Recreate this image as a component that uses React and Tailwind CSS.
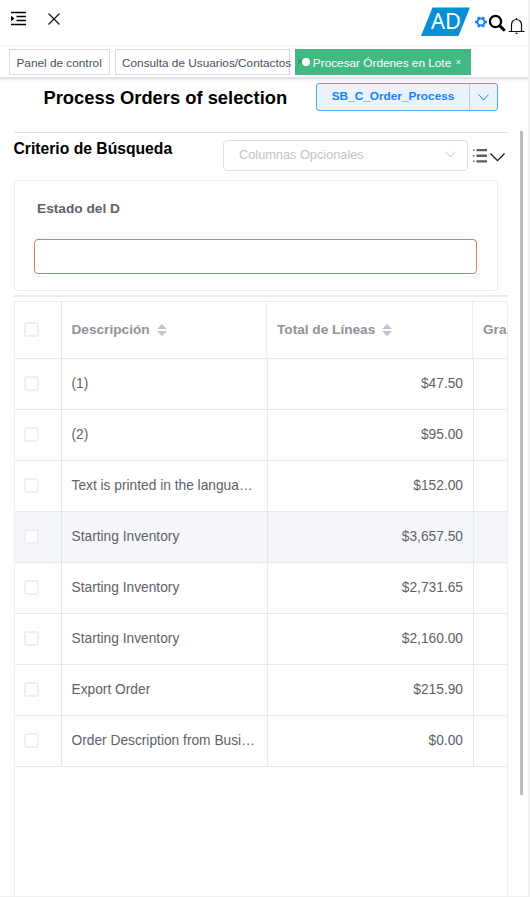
import React from "react";

const rows = [
  ["(1)", "$47.50"],
  ["(2)", "$95.00"],
  ["Text is printed in the langua…", "$152.00"],
  ["Starting Inventory", "$3,657.50"],
  ["Starting Inventory", "$2,731.65"],
  ["Starting Inventory", "$2,160.00"],
  ["Export Order", "$215.90"],
  ["Order Description from Busi…", "$0.00"],
];

function Checkbox() {
  return <span className="block h-[15px] w-[15px] rounded-[3px] border-2 border-[#eff0f5] bg-white" />;
}

function SortIcon() {
  return (
    <svg width="10" height="12" viewBox="0 0 10 12" className="ml-[7px] shrink-0 fill-[#c0c4cc]">
      <path d="M0 5 5 0l5 5zM0 7h10l-5 5z" />
    </svg>
  );
}

function Chevron({ className }) {
  return (
    <svg width="11" height="7" viewBox="0 0 11 7" fill="none" stroke="currentColor" className={className}>
      <path d="m.5.5 5 5.500 5-5.500" />
    </svg>
  );
}

function Header() {
  return (
    <header className="flex h-[45px] shrink-0 items-start pl-[10px]">
      <svg width="17" height="15" viewBox="0 0 17 15" className="mt-[11px]" stroke="#000" strokeWidth="1.3">
        <path d="M1 1.500h15M6.500 5.500H16M6.500 9.500H16M1 13.500h15" />
        <path d="M1 4.800 4.500 7.500 1 10.200z" stroke="none" />
      </svg>
      <svg width="12" height="12" viewBox="0 0 12 12" className="mt-[13px] ml-[21px]" stroke="#111" strokeWidth="1.2">
        <path d="m.5.5 11 11M11.500.5l-11 11" />
      </svg>
      <svg width="49" height="29" viewBox="0 0 49 29" className="mt-[7px] ml-[361px]">
        <path d="M11.500.5H49L37.500 29H0z" fill="#058fd4" />
        <text x="10" y="22" fill="#fff" fontFamily="Noto Sans" fontSize="21" textLength="30" lengthAdjust="spacingAndGlyphs">AD</text>
      </svg>
      <svg width="12" height="12" viewBox="0 0 12 12" className="mt-[16px] ml-[5px]" fill="none" stroke="#1682f5">
        <circle cx="6" cy="6" r="3.500" strokeWidth="2" />
        <path d="M3.900 2.400 3.200 1M8.100 2.400 8.800 1M10 6h2M8.100 9.600l.7 1.400M3.900 9.600 3.200 11M2 6H0" strokeWidth="2.600" />
      </svg>
      <svg width="18" height="18" viewBox="0 0 18 18" className="mt-[14px] ml-[1px]" fill="none" stroke="#000">
        <circle cx="7.500" cy="7.500" r="5.600" strokeWidth="2.300" />
        <path d="m11.500 11.500 5.300 5.300" strokeWidth="3" />
      </svg>
      <svg width="17" height="17" viewBox="0 0 17 17" className="mt-[17px] ml-[2px]" fill="none" stroke="#111" strokeWidth="1.200">
        <path d="M.5 14.500h16M3.500 14.500V7.500a5 5 0 0 1 10 0v7M7.500 16.400h2M8.500 2.500V1" />
      </svg>
    </header>
  );
}

function Tabs() {
  return (
    <nav className="flex h-[34px] shrink-0 gap-[5px] border-b-2 border-[#e0e2e6] bg-white pt-[4px] pl-[9px] text-[11.800px] leading-[26px] whitespace-nowrap text-[#495060] shadow-[0_1px_2px_rgba(0,0,0,0.08),inset_0_1px_2px_rgba(0,0,0,0.06)]">
      <div className="h-[26px] w-[101px] border border-[#d8dce5] pl-[6.500px]">Panel de control</div>
      <div className="h-[26px] w-[175px] border border-[#d8dce5] pl-[6px]">Consulta de Usuarios/Contactos</div>
      <div className="flex h-[26px] w-[176px] items-center bg-[#42b983] pl-[2px] text-white">
        <span className="text-[10px] leading-none text-[#2d8a60]">×</span>
        <span className="-ml-px h-[8px] w-[8px] rounded-full bg-white" />
        <span className="ml-[3px] pt-[2px]">Procesar Órdenes en Lote</span>
        <span className="ml-[4.500px] text-[9px]">×</span>
      </div>
    </nav>
  );
}

function TitleRow() {
  return (
    <div className="flex h-[53px] shrink-0 pt-[4px] pl-[43.500px]">
      <h1 className="w-[272.500px] pt-[4px] text-[18.350px] leading-[22px] font-bold text-black">Process Orders of selection</h1>
      <div className="flex h-[28px] w-[182px] rounded-[3px] border border-[#55a7f8] bg-[#e8f3fe] text-[#1682f5]">
        <div className="flex w-[153px] items-center justify-center border-r border-[#a9d2fb] text-[11.800px] font-bold">SB_C_Order_Process</div>
        <div className="flex flex-1 items-center justify-center"><Chevron /></div>
      </div>
    </div>
  );
}

function Criteria() {
  return (
    <section className="mr-[20px] ml-[13.500px] h-[165px] shrink-0 border-t border-b-2 border-t-[#dfe2e8] border-b-[#e9ebf1]">
      <div className="flex h-[47px] pt-[7px]">
        <h2 className="w-[209.500px] text-[15.700px] leading-[18px] font-bold text-black">Criterio de Búsqueda</h2>
        <div className="flex h-[31px] w-[245px] items-center justify-between rounded-[4px] border border-[#dcdfe6] pr-[11px] pb-[2px] pl-[15px] text-[12.750px] text-[#c0c4cc]">
          <span>Columnas Opcionales</span>
          <Chevron />
        </div>
        <svg width="14" height="14" viewBox="0 0 14 14" className="mt-[9px] ml-[5px]" fill="#5c5e62">
          <path d="M3.500 0H14v2.300H3.500zM3.500 5.500H14v2.400H3.500zM3.500 11.200H14v2.300H3.500zM0 .4h1.500v1.500H0zM0 6h1.500v1.500H0zM0 11.600h1.500v1.500H0z" />
        </svg>
        <svg width="15" height="9" viewBox="0 0 15 9" className="mt-[13px] ml-[3px]" fill="none" stroke="#111" strokeWidth="1.200">
          <path d="m.5.5 7 7.200 7-7.200" />
        </svg>
      </div>
      <div className="h-[111px] w-[484px] rounded-[4px] border border-[#ebeef5] pt-[19px] pl-[19.500px]">
        <label className="block h-[39px] pl-[3px] text-[13.700px] leading-[18px] font-bold text-[#606266]">Estado del D</label>
        <div className="h-[35px] w-[443px] rounded-[4px] border border-[#f56c6c]" />
      </div>
    </section>
  );
}

function OrdersTable() {
  return (
    <section className="mt-[4px] mr-[20px] ml-[14px] flex min-h-0 flex-1 flex-col overflow-hidden border border-b-0 border-[#ebeef5] text-[13.750px] text-[#606266]">
      <div className="flex h-[57px] shrink-0 border-b border-[#e6e9f1] text-[13.650px] font-bold text-[#909399]">
        <div className="flex w-[47px] shrink-0 items-center border-r border-[#e1e4ec] pb-[2px] pl-[9px]"><Checkbox /></div>
        <div className="flex w-[204px] shrink-0 items-center pl-[9.500px]">Descripción<SortIcon /></div>
        <div className="flex w-[207px] shrink-0 items-center border-x border-[#e9ecf3] pl-[10px]">Total de Líneas<SortIcon /></div>
        <div className="flex shrink-0 items-center pl-[10px]">Gra</div>
      </div>
      {rows.map(([description, total], index) => (
        <div key={index} className={index === 3 ? "flex h-[51px] shrink-0 border-b border-[#e5e8ef] bg-[#f5f7fa]" : "flex h-[51px] shrink-0 border-b border-[#e5e8ef]"}>
          <div className="flex w-[47px] shrink-0 items-center border-r border-[#e1e4ec] pb-[2px] pl-[9px]"><Checkbox /></div>
          <div className="flex w-[206px] shrink-0 items-center border-r border-[#e6e9f1] pl-[9.500px] whitespace-nowrap">{description}</div>
          <div className="flex w-[206px] shrink-0 items-center justify-end border-r border-[#e6e9f1] pr-[10px]">{total}</div>
        </div>
      ))}
    </section>
  );
}

export default function App() {
  return (
    <div className="h-[897px] w-[530px] overflow-hidden border-r-2 border-b border-[#f1f1f1] bg-white font-['Liberation_Sans',Arial,sans-serif]">
      <div className="relative flex h-full flex-col">
        <Header />
        <Tabs />
        <TitleRow />
        <Criteria />
        <OrdersTable />
        <div className="absolute top-[131px] right-[5px] h-[664px] w-[3px] bg-[#bdbdbd]" />
      </div>
    </div>
  );
}
